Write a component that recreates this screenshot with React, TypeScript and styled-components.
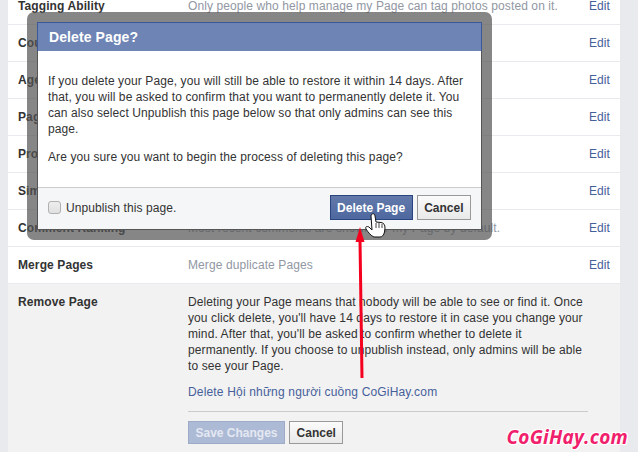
import React from "react";
import styled, { createGlobalStyle } from "styled-components";

const Global = createGlobalStyle`
  html, body { margin: 0; padding: 0; background: #e9eaed; }
  body { font-family: "Liberation Sans", Arial, sans-serif; font-size: 12px; color: #333; }
`;

const Page = styled.div`
  position: relative;
  width: 638px;
  height: 452px;
  overflow: hidden;
  background: #e9eaed;
`;

const Panel = styled.div`
  width: 612px;
  margin: -12px 0 0 8px;
  background: #fff;
`;

const Row = styled.div`
  display: grid;
  grid-template-columns: 170px 1fr auto;
  align-items: center;
  height: 36px;
  padding: 0 10px 0 10px;
  border-bottom: 1px solid #e9eaed;
`;

const Label = styled.div`
  font-weight: bold;
  font-size: 12px;
  letter-spacing: 0.1px;
  color: #333;
`;

const RemoveLabel = styled(Label)`
  line-height: 16px;
`;

const Value = styled.div`
  font-size: 12px;
  letter-spacing: 0.1px;
  color: #9197a3;
  white-space: nowrap;
`;

const EditLink = styled.a`
  font-size: 12px;
  letter-spacing: 0.1px;
  color: #46609a;
`;

const RemoveSection = styled.div`
  display: grid;
  grid-template-columns: 170px 400px;
  padding: 10px 10px 0;
  height: 160px;
  background: #f2f2f2;
`;

const RemoveText = styled.p`
  margin: 0;
  font-size: 12px;
  line-height: 16px;
  letter-spacing: 0.1px;
  color: #333;
`;

const DeleteLink = styled.a`
  display: block;
  margin-top: 10px;
  font-size: 12px;
  line-height: 16px;
  letter-spacing: 0.17px;
  color: #46609a;
`;

const Divider = styled.div`
  margin-top: 11px;
  height: 1px;
  background: #ccc;
`;

const Actions = styled.div`
  display: flex;
  gap: 4px;
  margin-top: 9px;
`;

const SaveButton = styled.button`
  height: 23px;
  padding: 0 6.5px;
  font: bold 12px "Liberation Sans", Arial, sans-serif;
  color: #e4e8f1;
  background: #adbad6;
  border: 1px solid #9dabc9;
`;

const GreyButton = styled.button<{ $tall?: boolean }>`
  height: ${(p) => (p.$tall ? 25 : 23)}px;
  padding: 0 6.5px;
  font: bold 12px "Liberation Sans", Arial, sans-serif;
  color: #333;
  background: linear-gradient(#fbfbfb, #e9e9e9);
  border: 1px solid #999;
`;

const Frame = styled.div`
  position: absolute;
  left: 27px;
  top: 12px;
  width: 445px;
  padding: 10px;
  border-radius: 7px;
  background: rgba(82, 82, 82, 0.7);
`;

const Dialog = styled.div`
  background: #fff;
  border: 1px solid #555;
  border-top-color: #3b5998;
`;

const DialogHeader = styled.div`
  height: 28px;
  margin: -1px -1px 0;
  padding-left: 11px;
  display: flex;
  align-items: center;
  border: 1px solid #3b5998;
  border-bottom: 0;
  background: #6d84b4;
  color: #fff;
  font-size: 14px;
  font-weight: bold;
  letter-spacing: 0.1px;
`;

const DialogBody = styled.div`
  padding: 22px 10px 16px;
  height: 98px;
`;

const DialogText = styled.p`
  margin: 0 0 12px;
  font-size: 12px;
  line-height: 16px;
  letter-spacing: 0.1px;
  color: #333;
`;

const DialogFooter = styled.div`
  display: flex;
  align-items: center;
  justify-content: space-between;
  height: 42px;
  padding: 0 10px 2px 10px;
  box-sizing: border-box;
  border-top: 1px solid #ccc;
  background: #f5f6f7;
`;

const CheckLabel = styled.label`
  display: flex;
  align-items: center;
  gap: 5px;
  font-size: 12px;
  letter-spacing: 0.08px;
  color: #333;
`;

const CheckBox = styled.span`
  width: 11px;
  height: 11px;
  border: 1px solid #b0b0b0;
  border-radius: 3px;
  background: linear-gradient(#eee, #e0e0e0);
`;

const FooterActions = styled.div`
  display: flex;
  gap: 4px;
`;

const PrimaryButton = styled.button`
  height: 25px;
  padding: 0 6.5px;
  font: bold 12px "Liberation Sans", Arial, sans-serif;
  color: #fff;
  background: linear-gradient(#6279a9, #4e68a0);
  border: 1px solid #29447e;
`;

const Watermark = styled.div`
  position: absolute;
  right: 10px;
  bottom: 2px;
  font: italic bold 19px "Open Sans", sans-serif;
  letter-spacing: 0.25px;
  color: #f0206c;
  text-shadow: -1px -1px 0 #fff, 1px -1px 0 #fff, -1px 1px 0 #fff, 1px 1px 0 #fff;
`;

const Overlay = styled.svg`
  position: absolute;
  left: 0;
  top: 0;
  pointer-events: none;
`;

const rows = [
  ["Tagging Ability", "Only people who help manage my Page can tag photos posted on it."],
  ["Country Restrictions", "Page is visible to everyone."],
  ["Age Restrictions", "Page is shown to everyone."],
  ["Page Moderation", "No words are being blocked from the Page."],
  ["Profanity Filter", "Turned off"],
  ["Similar Page Suggestions", "Choose whether your Page is recommended to others"],
  ["Comment Ranking", "Most recent comments are shown for my Page by default."],
  ["Merge Pages", "Merge duplicate Pages"],
];

export default function App() {
  return (
    <Page>
      <Global />
      <Panel>
        {rows.map(([label, value]) => (
          <Row key={label}>
            <Label>{label}</Label>
            <Value>{value}</Value>
            <EditLink>Edit</EditLink>
          </Row>
        ))}
        <RemoveSection>
          <RemoveLabel>Remove Page</RemoveLabel>
          <div>
            <RemoveText>
              Deleting your Page means that nobody will be able to see or find it. Once you click delete, you'll have 14 days to restore it in case you change your mind. After that, you'll be asked to confirm whether to delete it permanently. If you choose to unpublish instead, only admins will be able to see your Page.
            </RemoveText>
            <DeleteLink>Delete Hội những người cuồng CoGiHay.com</DeleteLink>
            <Divider />
            <Actions>
              <SaveButton>Save Changes</SaveButton>
              <GreyButton>Cancel</GreyButton>
            </Actions>
          </div>
        </RemoveSection>
      </Panel>
      <Frame>
        <Dialog>
          <DialogHeader>Delete Page?</DialogHeader>
          <DialogBody>
            <DialogText>
              If you delete your Page, you will still be able to restore it within 14 days. After that, you will be asked to confirm that you want to permanently delete it. You can also select Unpublish this page below so that only admins can see this page.
            </DialogText>
            <DialogText>Are you sure you want to begin the process of deleting this page?</DialogText>
          </DialogBody>
          <DialogFooter>
            <CheckLabel>
              <CheckBox />
              Unpublish this page.
            </CheckLabel>
            <FooterActions>
              <PrimaryButton>Delete Page</PrimaryButton>
              <GreyButton $tall>Cancel</GreyButton>
            </FooterActions>
          </DialogFooter>
        </Dialog>
      </Frame>
      <Overlay width="638" height="452" viewBox="0 0 638 452">
        <path d="M362 378 L360 240" stroke="#f5001e" strokeWidth="3" fill="none" />
        <path d="M360 227 L355.5 242 L364.5 242 Z" fill="#f5001e" />
        <path
          d="M371 216 C371 213 375 213 375 216 L376 222 L381 222.5 C384 223 385 225 385 228 L384.5 232 C384 235 382 237 380 237 L374 237 C371 236 368 232 366 229 C365 226.5 367 226 369 227 L372 230 Z"
          fill="#fff"
          stroke="#111"
          strokeWidth="1"
        />
        <path d="M376 223 L376 228 M379 223 L379 228 M382 224 L382 228" stroke="#111" strokeWidth="0.8" />
      </Overlay>
      <Watermark>CoGiHay.com</Watermark>
    </Page>
  );
}
